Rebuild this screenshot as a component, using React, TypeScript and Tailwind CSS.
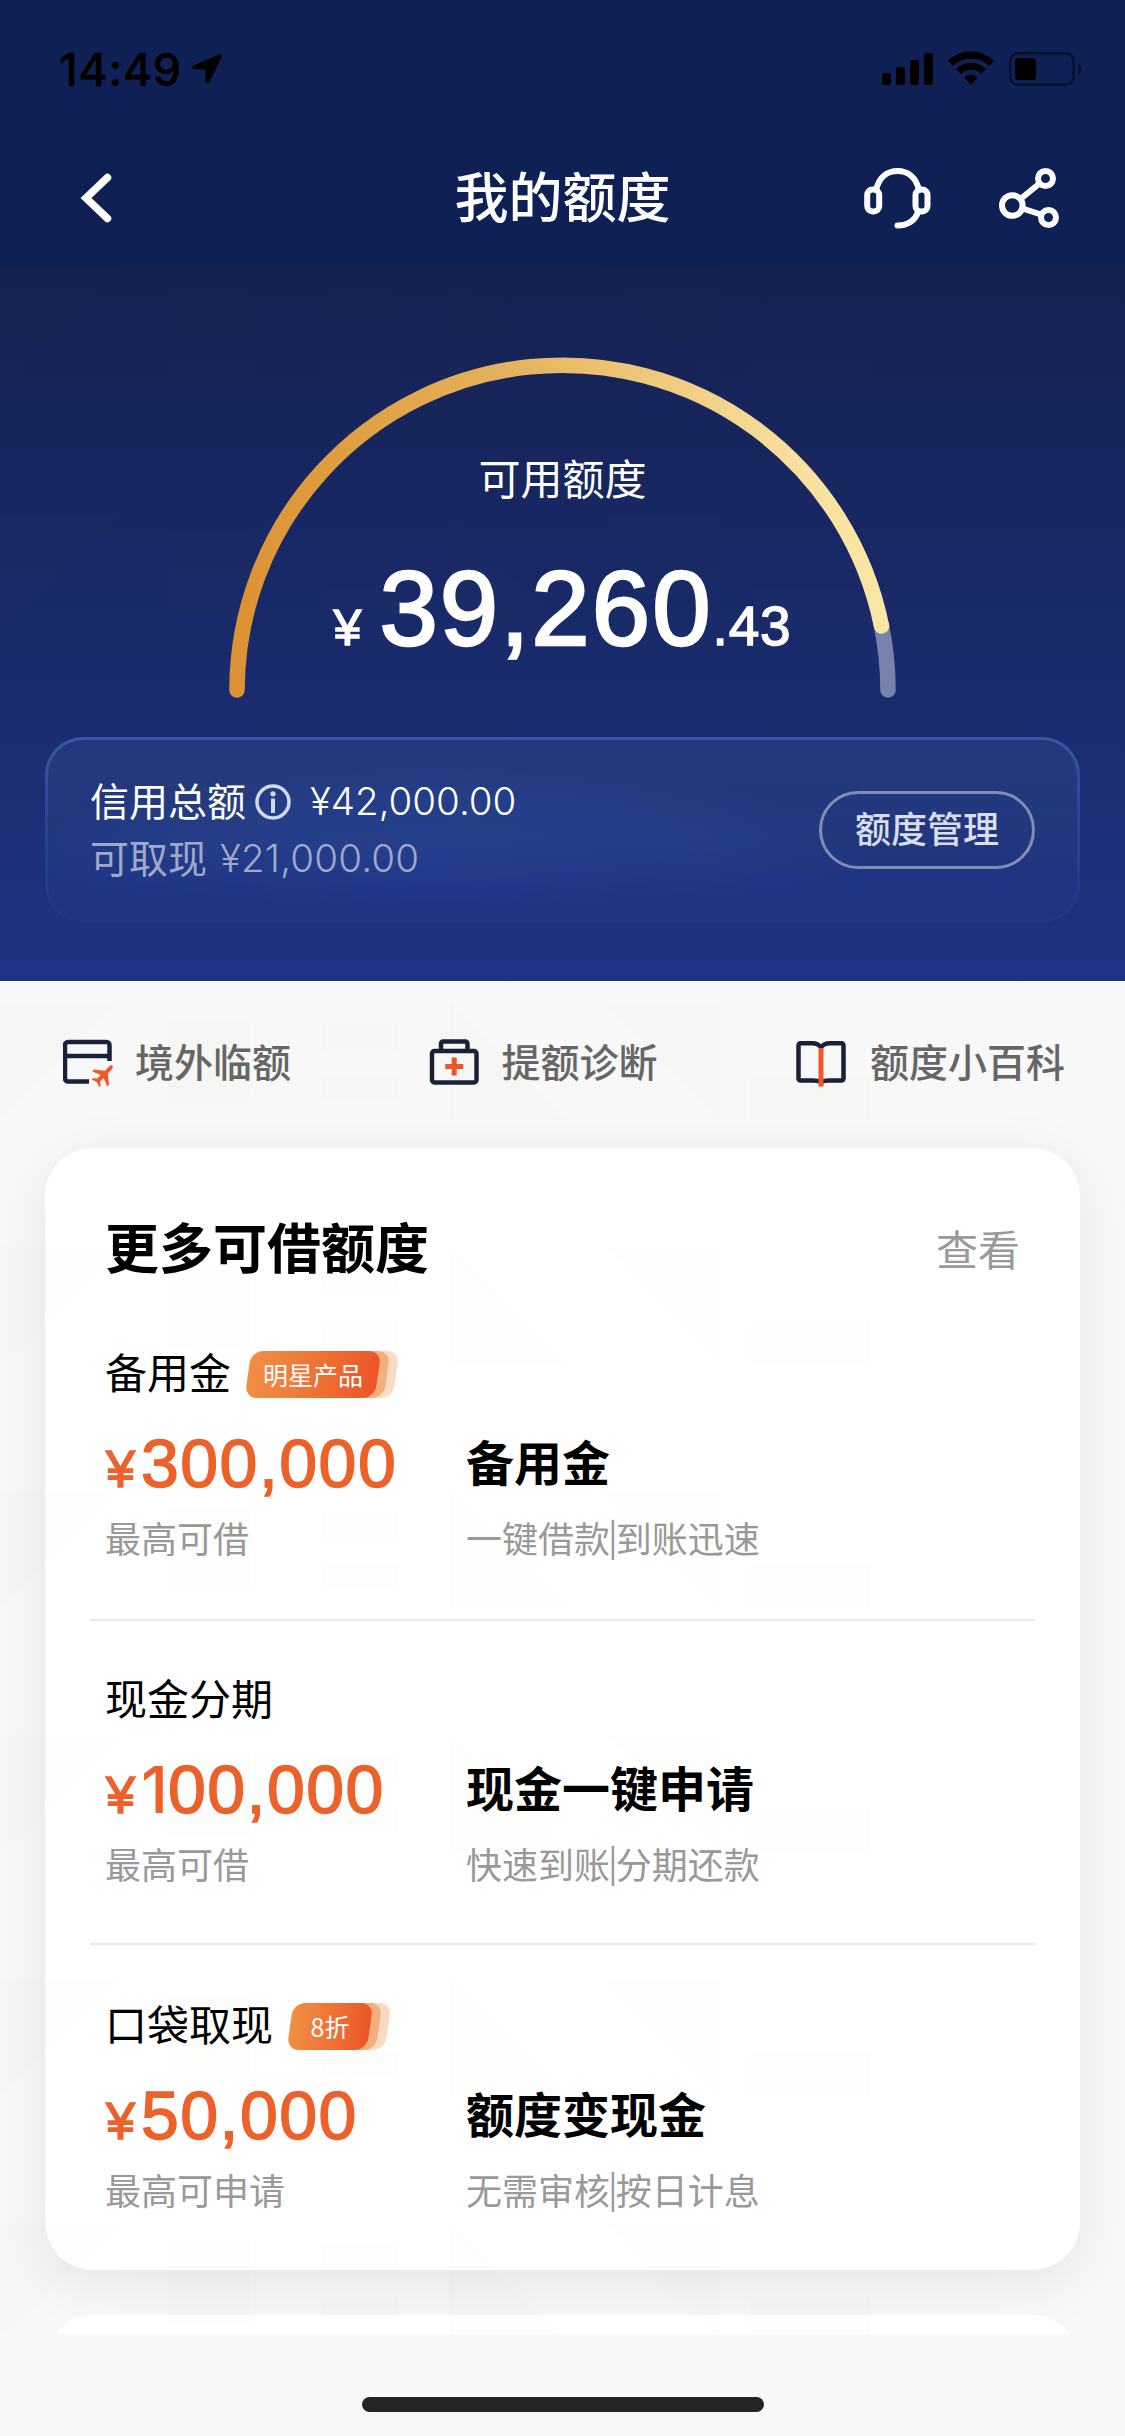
interface Product {
  id: number;
  nombre: string;
  badge?: string;
  amount: string;
  limitLabel: string;
  title: string;
  tags: [string, string];
}

const products: Product[] = [
  {
    id: 1,
    nombre: "备用金",
    badge: "明星产品",
    amount: "300,000",
    limitLabel: "最高可借",
    title: "备用金",
    tags: ["一键借款", "到账迅速"],
  },
  {
    id: 2,
    nombre: "现金分期",
    amount: "100,000",
    limitLabel: "最高可借",
    title: "现金一键申请",
    tags: ["快速到账", "分期还款"],
  },
  {
    id: 3,
    nombre: "口袋取现",
    badge: "8折",
    amount: "50,000",
    limitLabel: "最高可申请",
    title: "额度变现金",
    tags: ["无需审核", "按日计息"],
  },
];

function StatusBar() {
  return (
    <div className="flex h-[132px] items-start justify-between pl-[59px] pr-[42px] pt-[51px] text-black">
      <div className="flex items-start">
        <span className="w-[133px] whitespace-nowrap font-['Inter',sans-serif] text-[45px] font-medium leading-[38px] tracking-[0.6px] [-webkit-text-stroke:0.4px_#000]">
          14:49
        </span>
        <svg className="mt-[3px]" width="30" height="30" viewBox="0 0 30 30">
          <path
            d="M27 .5 1.500 11.600c-2 1-1.700 3.700.5 3.700l11.300.2.200 12c.1 2.300 3 2.700 4 .6L29.500 3.300c.9-2-.6-3.600-2.500-2.800z"
            fill="currentColor"
          />
        </svg>
      </div>
      <div className="flex items-start">
        <svg width="52" height="36" viewBox="0 0 52 36" fill="currentColor">
          <rect x="0" y="22" width="9" height="12" rx="2.500" />
          <rect x="14" y="16" width="9" height="18" rx="2.500" />
          <rect x="28" y="9" width="9" height="25" rx="2.500" />
          <rect x="42" y="2" width="9" height="32" rx="2.500" />
        </svg>
        <svg className="ml-[14px]" width="46" height="36" viewBox="0 0 46 36">
          <g fill="none" stroke="currentColor" strokeWidth="7">
            <path d="M2.500 12.500a29 29 0 0 1 41 0" />
            <path d="M10.500 20.500a17.600 17.600 0 0 1 25 0" />
          </g>
          <path d="M16.300 26.500a9.400 9.400 0 0 1 13.400 0L23 34z" fill="currentColor" />
        </svg>
        <svg className="ml-[15px]" width="74" height="36" viewBox="0 0 74 36">
          <rect
            x="1.200"
            y="2.200"
            width="63.500"
            height="31.500"
            rx="8"
            fill="none"
            stroke="#07112e"
            strokeWidth="2.500"
          />
          <rect x="6" y="7" width="21" height="22" rx="3.500" fill="currentColor" />
          <path d="M69 12.500c5 2 5 9 0 11z" fill="#07112e" />
        </svg>
      </div>
    </div>
  );
}

function NavBar() {
  return (
    <div className="grid h-[133px] grid-cols-3 items-start px-[66px] pt-[36px] text-white">
      <svg
        className="ml-[12px]"
        width="36"
        height="60"
        viewBox="0 0 36 60"
        fill="none"
        stroke="currentColor"
        strokeWidth="7.500"
        strokeLinecap="round"
      >
        <path d="M29.500 9.500 8 30l21.500 20.500" strokeLinejoin="miter" />
      </svg>
      <h1 className="text-center text-[54px] font-medium leading-[54px]">
        我的额度
      </h1>
      <div className="flex justify-end gap-[67px]">
        <svg
          width="68"
          height="62"
          viewBox="0 0 68 62"
          fill="none"
          stroke="currentColor"
          strokeWidth="6"
          strokeLinecap="round"
        >
          <path d="M12 22C15 9.500 23 3 33.500 3S52 9.500 55 22" />
          <rect x="3.200" y="21.500" width="12" height="22" rx="5.500" />
          <rect x="51.500" y="21.500" width="12" height="22" rx="5.500" />
          <path d="M54 44c-2.500 8-10 13.500-20.500 13.500" />
        </svg>
        <svg
          width="60"
          height="62"
          viewBox="0 0 60 62"
          fill="none"
          stroke="currentColor"
          strokeWidth="6"
        >
          <circle cx="13.300" cy="37.500" r="10.300" />
          <circle cx="46.500" cy="10.500" r="7.500" />
          <circle cx="49.500" cy="49.500" r="7.500" />
          <path d="m21.500 31 19-15.500M23.500 40.500l18.500 6" />
        </svg>
      </div>
    </div>
  );
}

function Gauge() {
  return (
    <div className="relative mt-[85px] h-[387px] w-full">
      <svg
        className="absolute left-[222px] top-0"
        width="681"
        height="352"
        viewBox="222 350 681 352"
        fill="none"
        strokeWidth="15.500"
        strokeLinecap="round"
      >
        <defs>
          <linearGradient
            id="gold"
            gradientUnits="userSpaceOnUse"
            x1="237"
            y1="0"
            x2="888"
            y2="0"
          >
            <stop offset="0" stopColor="#dc9234" />
            <stop offset="0.200" stopColor="#e0a044" />
            <stop offset="0.500" stopColor="#e9bb68" />
            <stop offset="0.850" stopColor="#f7df9c" />
            <stop offset="1" stopColor="#fae7a6" />
          </linearGradient>
        </defs>
        <path d="M881.500 626A325.500 325.500 0 0 1 888 690" stroke="#7682a9" />
        <path
          d="M237 690A325.500 325.500 0 0 1 881.500 626"
          stroke="url(#gold)"
        />
      </svg>
      <div className="flex flex-col items-center pt-[97px] text-white">
        <span className="text-[42px] leading-[60px]">可用额度</span>
        <div className="mt-[47px] flex items-baseline font-['Liberation_Sans',sans-serif] leading-[110px] [-webkit-text-stroke:1.4px_#fff]">
          <span className="mr-[18px] text-[50px]">¥</span>
          <span className="text-[105px] tracking-[2px] [-webkit-text-stroke:2.5px_#fff]">
            39,260
          </span>
          <span className="text-[55px] tracking-[0.8px]">.43</span>
        </div>
      </div>
    </div>
  );
}

function CreditPanel() {
  return (
    <div className="mx-[45px] flex h-[186px] items-start justify-between rounded-[38px] border-[3px] border-transparent pl-[42px] pr-[42px] [background:linear-gradient(transparent_55%,#1e3382)_padding-box,radial-gradient(ellipse_42%_66%_at_38%_76%,rgba(42,76,160,0.5),rgba(42,76,160,0.25)_70%,transparent)_padding-box,linear-gradient(#24397d,#21387f_50%,#1e3382)_padding-box,linear-gradient(#3857a8,#29448f_50%,#1f3586)_border-box]">
      <div className="pt-[33px]">
        <div className="flex items-center text-[39px] leading-[57px] text-white">
          <span className="relative -top-[2px]">信用总额</span>
          <svg
            className="ml-[9px] mr-[19px]"
            width="36"
            height="36"
            viewBox="0 0 36 36"
            fill="none"
            stroke="#d3d8e8"
            strokeWidth="3.500"
          >
            <circle cx="18" cy="18" r="16" />
            <path d="M18 14.500V29" strokeWidth="4" />
            <circle cx="18" cy="9.800" r="2.600" fill="#d3d8e8" stroke="none" />
          </svg>
          <span className="font-['Inter',sans-serif] text-[38.5px] font-light">
            ¥42,000.00
          </span>
        </div>
        <div className="flex items-center text-[39px] leading-[57px] text-[#a0a9cb]">
          <span className="relative -top-[2px]">可取现</span>
          <span className="ml-[13px] font-['Inter',sans-serif] text-[38.5px] font-light tracking-[0.2px]">
            ¥21,000.00
          </span>
        </div>
      </div>
      <button className="mt-[51px] h-[78px] w-[216px] rounded-full border-[3px] border-[#818db4] pb-[6px] text-[36px] font-medium leading-[65px] text-[#dadeea]">
        额度管理
      </button>
    </div>
  );
}

function OverseasIcon() {
  return (
    <svg width="50" height="50" viewBox="0 0 50 50" fill="none">
      <path
        d="M26 43.500H5a3 3 0 0 1-3-3V7a3 3 0 0 1 3-3h38.500a3 3 0 0 1 3 3v16M2 18h44.500"
        stroke="#1a2038"
        strokeWidth="4.500"
      />
      <path
        d="M49.400 27.700c.8.9.4 2.600-.8 3.800l-3.800 4L46 47l-1.700 1.300-3.700-8.200-3.400 3.200.4 4.600-1.300 1-2.500-5-5-2.300 1-1.400 4.600.3 3.200-3.500-8.200-3.600 1.300-1.900 11.500 1.200 3.700-4c1.200-1.200 2.800-1.800 3.500-1z"
        fill="#f0572a"
      />
    </svg>
  );
}

function DiagnoseIcon() {
  return (
    <svg width="50" height="50" viewBox="0 0 50 50" fill="none">
      <g stroke="#1a2038" strokeWidth="4.500" strokeLinejoin="round">
        <rect x="3" y="13" width="44.500" height="31.500" rx="2.500" />
        <path d="M12 12.500V5.500a2 2 0 0 1 2-2h22.500a2 2 0 0 1 2 2v7" />
      </g>
      <path d="M25.200 19.500v18M16.200 28.500h18" stroke="#f0572a" strokeWidth="5" />
    </svg>
  );
}

function BookIcon() {
  return (
    <svg width="50" height="50" viewBox="0 0 50 50" fill="none">
      <path
        d="M25 9.500C23 6.500 20 5.200 16 5.200H4.500a2 2 0 0 0-2 2V40.500a2 2 0 0 0 2 2H17c3.500 0 6 .5 8 1.500 2-1 4.500-1.500 8-1.500h12.500a2 2 0 0 0 2-2V7.200a2 2 0 0 0-2-2H34c-4 0-7 1.300-9 4.300z"
        stroke="#1a2038"
        strokeWidth="4.500"
        strokeLinejoin="round"
      />
      <path d="M25 10v38.500" stroke="#f0572a" strokeWidth="5" />
    </svg>
  );
}

function QuickLinks() {
  return (
    <div className="flex h-[167px] items-start justify-between pl-[63px] pr-[60px] pt-[57px] text-[39px] font-medium leading-[44px] text-[#666]">
      <div className="flex items-start gap-[22px]">
        <OverseasIcon />
        <span>境外临额</span>
      </div>
      <div className="flex items-start gap-[22px]">
        <DiagnoseIcon />
        <span>提额诊断</span>
      </div>
      <div className="flex items-start gap-[24px]">
        <BookIcon />
        <span>额度小百科</span>
      </div>
    </div>
  );
}

function Badge({ text }: { text: string }) {
  return (
    <div className="relative ml-[17px] flex h-[47px] min-w-[80px] items-center justify-center px-[15px]">
      <div className="absolute inset-y-0 left-[24px] -right-[18px] -skew-x-[8deg] rounded-[12px] bg-[#fadcc4]" />
      <div className="absolute inset-y-0 left-[12px] -right-[9px] -skew-x-[8deg] rounded-[12px] bg-[#f4b07c]" />
      <div className="absolute inset-0 -skew-x-[8deg] rounded-[12px] bg-gradient-to-r from-[#f08f44] to-[#ec5428]" />
      <span className="relative text-[25px] leading-[47px] text-white">
        {text}
      </span>
    </div>
  );
}

function Amount({ value }: { value: string }) {
  // Liberation's 1 has a foot serif, so a leading 1 is set in Inter
  const leadingOne = value.startsWith("1");
  return (
    <div className="flex h-[60px] items-baseline pl-px font-['Liberation_Sans',sans-serif] leading-[60px] text-[#ed612a] [-webkit-text-stroke:1.5px_#ed612a]">
      <span className="mr-[6px] text-[52px]">¥</span>
      {leadingOne && (
        <span className="w-[27px] font-['Inter',sans-serif] text-[65px] font-medium leading-[60px] [-webkit-text-stroke:0px]">
          1
        </span>
      )}
      <span className="text-[68px] tracking-[1.5px]">
        {leadingOne ? value.slice(1) : value}
      </span>
    </div>
  );
}

function ProductRow({ product }: { product: Product }) {
  return (
    <div className="border-b-2 border-[#e9e9e9] px-[15px] pb-[56px] pt-[49px] first:pb-[58px] first:pt-[47px] last:border-b-0 last:pt-[51px]">
      <div className="flex h-[60px] items-center text-[42px] leading-[60px] text-black">
        <span className="relative -top-[3px]">{product.nombre}</span>
        {product.badge && <Badge text={product.badge} />}
      </div>
      <div className="mt-[29px] grid h-[60px] grid-cols-[361px_1fr] items-start">
        <Amount value={product.amount} />
        <div className="text-[48px] font-bold leading-[54px] text-black">
          {product.title}
        </div>
      </div>
      <div className="mt-[19px] grid h-[49px] grid-cols-[361px_1fr] text-[36px] leading-[50px] text-[#999]">
        <span>{product.limitLabel}</span>
        <span>
          {product.tags[0]}
          <span className="relative -top-[3px] -mx-[2px]">|</span>
          {product.tags[1]}
        </span>
      </div>
    </div>
  );
}

// faint geometric print that repeats down the whole scroll area
function Watermark() {
  return (
    <svg
      className="pointer-events-none absolute left-0 top-[265px]"
      width="1125"
      height="2069"
    >
      <defs>
        <pattern
          id="print"
          width="1125"
          height="244"
          patternUnits="userSpaceOnUse"
          patternTransform="translate(0 6)"
        >
          <g fill="#8c8c28" fillOpacity="0.010">
            <path d="M0 0h118L0 117z" />
            <path d="M168 17h83v83h-83z" />
            <path d="M323 21h75v26h-75zM323 74h75v24h-75z" />
            <path d="M450 0l115 117H450zM604 0h116v117z" />
            <path d="M751 74h119v43H751z" />
          </g>
        </pattern>
      </defs>
      <rect width="1125" height="2069" fill="url(#print)" />
    </svg>
  );
}

export default function App() {
  return (
    <div className="relative flex h-[2436px] w-[1125px] flex-col overflow-hidden bg-[#f8f8f8] font-['Noto_Sans_CJK_SC',sans-serif]">
      <header className="bg-[#0f2154]">
        <StatusBar />
        <NavBar />
      </header>
      <section className="h-[716px] bg-gradient-to-b from-[#142150] to-[#1e3384]">
        <Gauge />
        <CreditPanel />
      </section>
      <main className="h-[1353px] overflow-hidden">
        <QuickLinks />
        <section className="mx-[45px] h-[1122px] rounded-[48px] bg-white px-[45px] pt-[68px] shadow-[0_14px_60px_rgba(0,0,0,0.08)]">
          <div className="flex h-[81px] items-start justify-between px-[15px]">
            <h2 className="text-[54px] font-bold leading-[60px] text-black">
              更多可借额度
            </h2>
            <span className="text-[42px] leading-[64px] text-[#999]">查看</span>
          </div>
          <div>
            {products.map((product) => (
              <ProductRow key={product.id} product={product} />
            ))}
          </div>
        </section>
        <section className="mx-[45px] mt-[45px] h-[120px] rounded-[48px] bg-white" />
      </main>
      <footer className="flex flex-1 justify-center pt-[63px]">
        <div className="h-[15px] w-[402px] rounded-full bg-[#242424]" />
      </footer>
      <Watermark />
    </div>
  );
}
